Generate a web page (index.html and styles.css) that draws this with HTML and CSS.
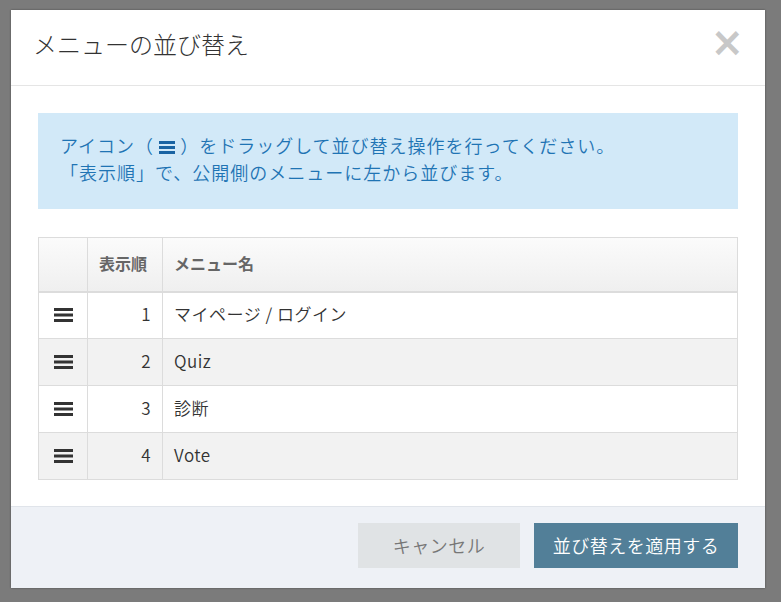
FILE: index.html
```html
<!DOCTYPE html>
<html lang="ja">
<head>
<meta charset="utf-8">
<title>メニューの並び替え</title>
<link rel="stylesheet" href="styles.css">
</head>
<body>
<div class="backdrop">
  <div class="modal">
    <div class="modal-header">
      <h1 class="modal-title">メニューの並び替え</h1>
      <span class="close">×</span>
    </div>
    <div class="modal-body">
      <div class="info">
        <p>アイコン（ <svg class="info-icon" viewBox="0 0 16 13" width="16" height="13"><rect x="0" y="0" width="16" height="3"/><rect x="0" y="5" width="16" height="3"/><rect x="0" y="10" width="16" height="3"/></svg> ）をドラッグして並び替え操作を行ってください。</p>
        <p>「表示順」で、公開側のメニューに左から並びます。</p>
      </div>
      <table class="sort-table">
        <thead>
          <tr><th class="c-handle"></th><th class="c-order">表示順</th><th class="c-name">メニュー名</th></tr>
        </thead>
        <tbody>
          <tr><td class="c-handle"><svg class="handle" viewBox="0 0 19 14" width="19" height="14"><rect x="0" y="0" width="19" height="3"/><rect x="0" y="5.5" width="19" height="3"/><rect x="0" y="11" width="19" height="3"/></svg></td><td class="c-order">1</td><td class="c-name">マイページ / ログイン</td></tr>
          <tr><td class="c-handle"><svg class="handle" viewBox="0 0 19 14" width="19" height="14"><rect x="0" y="0" width="19" height="3"/><rect x="0" y="5.5" width="19" height="3"/><rect x="0" y="11" width="19" height="3"/></svg></td><td class="c-order">2</td><td class="c-name">Quiz</td></tr>
          <tr><td class="c-handle"><svg class="handle" viewBox="0 0 19 14" width="19" height="14"><rect x="0" y="0" width="19" height="3"/><rect x="0" y="5.5" width="19" height="3"/><rect x="0" y="11" width="19" height="3"/></svg></td><td class="c-order">3</td><td class="c-name">診断</td></tr>
          <tr><td class="c-handle"><svg class="handle" viewBox="0 0 19 14" width="19" height="14"><rect x="0" y="0" width="19" height="3"/><rect x="0" y="5.5" width="19" height="3"/><rect x="0" y="11" width="19" height="3"/></svg></td><td class="c-order">4</td><td class="c-name">Vote</td></tr>
        </tbody>
      </table>
    </div>
    <div class="modal-footer">
      <button class="btn btn-cancel">キャンセル</button>
      <button class="btn btn-apply">並び替えを適用する</button>
    </div>
  </div>
</div>
</body>
</html>
```

FILE: styles.css
```css
* { box-sizing: border-box; }
html, body { margin: 0; padding: 0; }
body {
  width: 781px;
  height: 602px;
  overflow: hidden;
  background: #7b7b7b;
  font-family: "Noto Sans CJK JP", "Noto Sans", sans-serif;
  font-weight: 350;
  color: #333;
}
.backdrop {
  padding: 10px 0 0 11px;
}
.modal {
  width: 754px;
  height: 578px;
  background: #fff;
  display: flex;
  flex-direction: column;
  box-shadow: 0 0 2px rgba(0,0,0,0.4);
}
.modal-header {
  height: 76px;
  border-bottom: 1px solid #e5e5e5;
  display: flex;
  align-items: center;
  justify-content: space-between;
  padding: 0 21px 0 22px;
  flex: none;
}
.modal-title {
  margin: 0;
  font-size: 24px;
  font-weight: 300;
  color: #333;
  padding-bottom: 8px;
}
.close {
  font-family: "DejaVu Sans", sans-serif;
  font-size: 40px;
  font-weight: 700;
  color: #c8c8c8;
  line-height: 1;
  padding-bottom: 12px;
}
.modal-body {
  flex: 1;
  padding: 27px 27px 0 27px;
}
.info {
  background: #d2e9f8;
  color: #1f74b4;
  height: 96px;
  padding: 19px 22px;
  font-size: 18px;
  line-height: 27px;
}
.info p { margin: 0; letter-spacing: 1px; }
.info-icon {
  fill: #1a64a3;
  vertical-align: -1px;
}
.sort-table {
  margin-top: 28px;
  width: 700px;
  border-collapse: collapse;
  border: 1px solid #dcdcdc;
  font-size: 17px;
}
.sort-table th, .sort-table td {
  border: 1px solid #dcdcdc;
  padding: 0 11px 4px;
}
.sort-table thead tr {
  height: 54px;
  background: linear-gradient(#fbfbfb, #efefef);
}
.sort-table th {
  font-weight: 700;
  color: #666;
  font-size: 16px;
  border-bottom: 2px solid #dcdcdc;
  text-align: left;
  padding-bottom: 3px;
}
.sort-table tbody tr { height: 47px; }
.sort-table tbody tr:nth-child(even) { background: #f2f2f2; }
.sort-table td { color: #333; letter-spacing: 0.5px; }
.c-handle { width: 49px; text-align: center; padding: 0 !important; }
.c-order { width: 75px; }
td.c-order { text-align: right; }
.handle { fill: #333; display: block; margin: 0 auto; }
.modal-footer {
  flex: none;
  height: 82px;
  background: #eef1f6;
  border-top: 1px solid #e0e4ea;
  display: flex;
  justify-content: flex-end;
  align-items: flex-start;
  gap: 14px;
  padding: 16px 27px 0 0;
}
.btn {
  border: none;
  height: 45px;
  font-family: "Noto Sans CJK JP", "Noto Sans", sans-serif;
  font-weight: 350;
  font-size: 18px;
  letter-spacing: 0.5px;
  padding: 0 0 2px;
}
.btn-cancel {
  width: 162px;
  background: #e0e3e5;
  color: #777;
}
.btn-apply {
  width: 204px;
  background: #527f98;
  color: #fff;
}
```
